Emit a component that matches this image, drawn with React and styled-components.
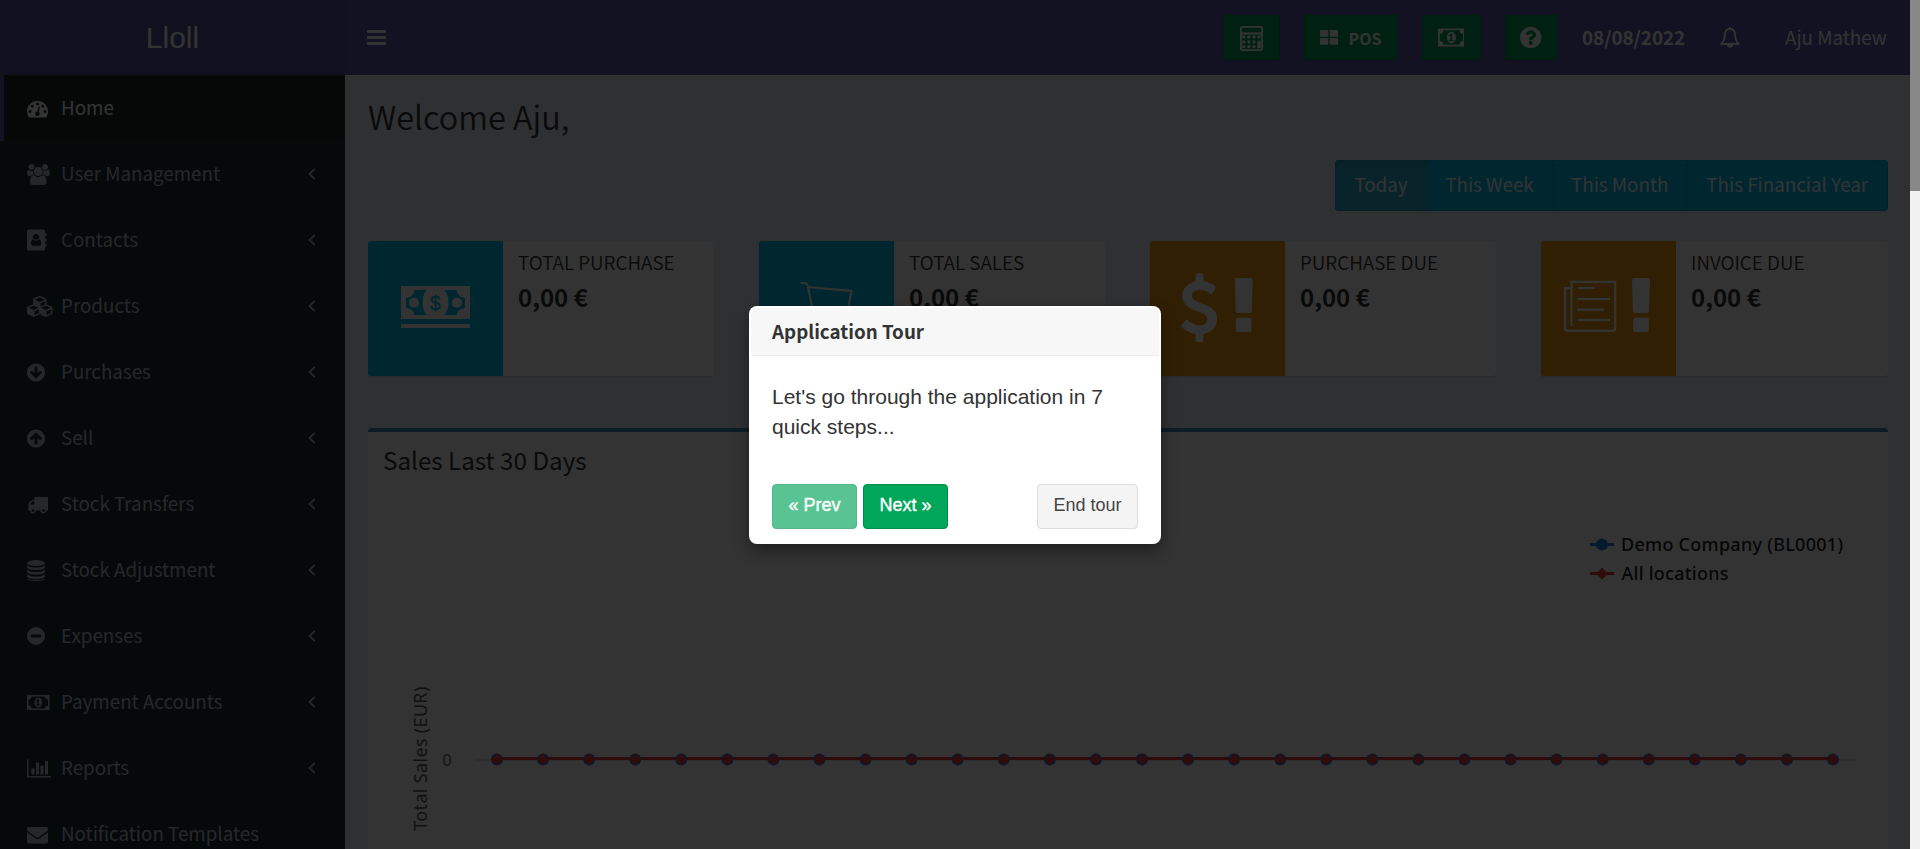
import React from "react";
import styled, { createGlobalStyle, css } from "styled-components";

const GlobalStyle = createGlobalStyle`
  * { box-sizing: border-box; }
  body { margin: 0; overflow: hidden; font-family: "Noto Sans CJK SC", "Noto Sans", sans-serif; font-size: 18.8px; color: #333; }
  button { font-family: inherit; margin: 0; cursor: pointer; }
  svg { display: block; flex: none; }
`;

const Window = styled.div`
  position: relative;
  display: flex;
  width: 1920px;
  height: 849px;
  overflow: hidden;
`;
const Page = styled.div`
  width: 1910px;
  display: flex;
  flex-direction: column;
  background: #ecf0f5;
`;
const ScrollTrack = styled.div`
  width: 10px;
  background: #f1f1f1;
`;
const ScrollThumb = styled.div`
  height: 191px;
  background: #888;
`;
const Header = styled.header`
  display: flex;
  flex: none;
  height: 75px;
  color: #fff;
`;
const Logo = styled.div`
  width: 345px;
  background: #555299;
  font: 30px/75px "Liberation Sans", Arial, sans-serif;
  text-align: center;
`;
const Navbar = styled.nav`
  flex: 1;
  display: flex;
  align-items: center;
  background: #605ca8;
  padding: 0 23px 0 22px;
`;
const NavTools = styled.div`
  margin-left: auto;
  display: flex;
  align-items: center;
`;
const NavButton = styled.button`
  width: ${(p) => p.$width}px;
  height: 45px;
  margin-right: 24px;
  padding: 0 1px 0 0;
  display: flex;
  align-items: center;
  justify-content: center;
  gap: 11px;
  border: 1px solid #008d4c;
  background: #00a65a;
  color: #fff;
  font-weight: 700;
  font-size: 16px;
`;
const NavDate = styled.strong`
  width: 105px;
  padding-bottom: 2px;
  font-size: 18.8px;
  line-height: 30px;
  white-space: nowrap;
`;
const NavBell = styled.span`
  margin: 0 45px 0 33px;
`;
const NavUser = styled.span`
  width: 102px;
  padding-bottom: 2px;
  line-height: 30px;
  white-space: nowrap;
`;
const Body = styled.div`
  display: flex;
  flex: 1;
  min-height: 0;
`;
const Sidebar = styled.aside`
  width: 345px;
  flex: none;
  background: #222d32;
  overflow: hidden;
`;
const MenuItem = styled.div`
  height: 66px;
  display: flex;
  align-items: center;
  padding: 0 29px 0 23px;
  border-left: 4px solid transparent;
  color: #b8c7ce;
  line-height: 30px;
  ${(p) =>
    p.$active &&
    css`
      border-left-color: #605ca8;
      background: #1e282c;
      color: #fff;
    `}
`;
const MenuIcon = styled.span`
  width: 34px;
  display: flex;
`;
const MenuLabel = styled.span`
  flex: 1;
  white-space: nowrap;
  margin-top: -3px;
`;
const Content = styled.main`
  flex: 1;
  padding: 0 22px 0 23px;
  display: flex;
  flex-direction: column;
`;
const Welcome = styled.h1`
  margin: 21px 0 1px;
  font-size: 32.4px;
  font-weight: 350;
  line-height: 40px;
`;
const RangeGroup = styled.div`
  margin-top: 23px;
  align-self: flex-end;
  display: flex;
  height: 51px;
  border-radius: 4px;
  overflow: hidden;
`;
const RangeButton = styled.div`
  width: ${(p) => p.$width}px;
  border: 1px solid ${(p) => (p.$active ? "#269abc" : "#00acd6")};
  border-left-width: ${(p) => (p.$active ? 1 : 0)}px;
  background: ${(p) => (p.$active ? "#31b0d5" : "#00c0ef")};
  box-shadow: ${(p) => (p.$active ? "inset 0 4px 7px rgba(0,0,0,.125)" : "none")};
  color: #fff;
  line-height: 46px;
  text-align: center;
  white-space: nowrap;
`;
const Cards = styled.div`
  margin-top: 30px;
  display: grid;
  grid-template-columns: repeat(3, 346px) 347px;
  column-gap: 45px;
`;
const Card = styled.section`
  height: 135px;
  display: flex;
  background: #fff;
  border-radius: 3px;
  overflow: hidden;
  box-shadow: 0 1.5px 1.5px rgba(0, 0, 0, 0.1);
`;
const CardIcon = styled.div`
  width: 135px;
  background: ${(p) => p.$color};
  color: #fff;
`;
const CardBody = styled.div`
  padding: 6px 15px;
`;
const CardLabel = styled.div`
  font-size: 18.9px;
  font-weight: 350;
  line-height: 30px;
  text-transform: uppercase;
`;
const CardValue = styled.div`
  margin-top: 6px;
  font-weight: 700;
  font-size: 24px;
  line-height: 28px;
`;
const ChartBox = styled.section`
  margin-top: 52px;
  flex: 1;
  background: #fff;
  border-top: 4px solid #3c8dbc;
  border-radius: 4px 4px 0 0;
`;
const ChartTitle = styled.h3`
  margin: 0;
  padding: 12px 15px 0;
  height: 58px;
  font-size: 24.2px;
  font-weight: 400;
  line-height: 32px;
`;
const Backdrop = styled.div`
  position: absolute;
  inset: 0 10px 0 0;
  background: rgba(0, 0, 0, 0.8);
`;
const Popover = styled.div`
  position: absolute;
  left: 749px;
  top: 306px;
  width: 412px;
  height: 238px;
  padding: 2px;
  display: flex;
  flex-direction: column;
  background: #fff;
  border-radius: 8px;
  box-shadow: 0 7px 15px rgba(0, 0, 0, 0.4);
`;
const PopoverTitle = styled.h3`
  margin: 0;
  height: 48px;
  padding: 0 21px;
  border-bottom: 1px solid #ebebeb;
  border-radius: 7px 7px 0 0;
  background: #f7f7f7;
  font-size: 18.8px;
  font-weight: 700;
  line-height: 45px;
`;
const PopoverText = styled.p`
  margin: 0;
  padding: 26px 21px 0;
  height: 128px;
  font: 21px/30px "Liberation Sans", Arial, sans-serif;
`;
const PopoverActions = styled.div`
  display: flex;
  gap: 6px;
  padding: 0 21px;
`;
const TourButton = styled.button`
  width: ${(p) => p.$width}px;
  height: 45px;
  padding: 0 0 2px;
  border: 1px solid ${(p) => (p.$plain ? "#ddd" : "#008d4c")};
  border-radius: 4px;
  background: ${(p) => (p.$plain ? "#f4f4f4" : "#00a65a")};
  color: ${(p) => (p.$plain ? "#444" : "#fff")};
  opacity: ${(p) => (p.$disabled ? 0.65 : 1)};
  margin-left: ${(p) => (p.$plain ? "auto" : 0)};
  font: 18px "Liberation Sans", Arial, sans-serif;
  -webkit-text-stroke: ${(p) => (p.$plain ? 0 : 0.4)}px currentColor;
`;

const PATHS = {
  gauge: "M384 1152q0-53-37.5-90.5t-90.5-37.5-90.5 37.5-37.5 90.5 37.5 90.5 90.5 37.5 90.5-37.5 37.5-90.5zm192-448q0-53-37.5-90.5t-90.5-37.5-90.5 37.5-37.5 90.5 37.5 90.5 90.5 37.5 90.5-37.5 37.5-90.5zm428 481l101-382q6-26-7.5-48.5t-38.5-29.5-48 6.5-30 39.5l-101 382q-60 5-107 43.5t-63 98.5q-20 77 20 146t117 89 146-20 89-117q16-60-6-117t-72-91zm660-33q0-53-37.5-90.5t-90.5-37.5-90.5 37.5-37.5 90.5 37.5 90.5 90.5 37.5 90.5-37.5 37.5-90.5zm-640-640q0-53-37.5-90.5t-90.5-37.5-90.5 37.5-37.5 90.5 37.5 90.5 90.5 37.5 90.5-37.5 37.5-90.5zm448 192q0-53-37.5-90.5t-90.5-37.5-90.5 37.5-37.5 90.5 37.5 90.5 90.5 37.5 90.5-37.5 37.5-90.5zm320 448q0 261-141 483-19 29-54 29h-1402q-35 0-54-29-141-221-141-483 0-182 71-348t191-286 286-191 348-71 348 71 286 191 191 286 71 348z",
  users: "M593 896q-162 5-265 128h-134q-82 0-138-40.5t-56-118.5q0-353 124-353 6 0 43.5 21t97.5 42.5 119 21.5q67 0 133-23-5 37-5 66 0 159 93 305zm1071 637q0 120-73 189.5t-194 69.5h-874q-121 0-194-69.5t-73-189.5q0-53 3.5-103.5t14-109 26.5-108.5 43-97.5 62-81 85.5-53.5 111.5-20q10 0 43 21.5t73 48 107 48 135 21.5 135-21.5 107-48 73-48 43-21.5q61 0 111.5 20t85.5 53.5 62 81 43 97.5 26.5 108.5 14 109 3.5 103.5zm-1024-1277q0 106-75 181t-181 75-181-75-75-181 75-181 181-75 181 75 75 181zm704 384q0 159-112.5 271.5t-271.5 112.5-271.5-112.5-112.5-271.5 112.5-271.5 271.5-112.5 271.5 112.5 112.5 271.5zm576 225q0 78-56 118.5t-138 40.5h-134q-103-123-265-128 93-146 93-305 0-29-5-66 66 23 133 23 59 0 119-21.5t97.5-42.5 43.5-21q124 0 124 353zm-128-609q0 106-75 181t-181 75-181-75-75-181 75-181 181-75 181 75 75 181z",
  cubes: "M640 1632l384-192v-314l-384 164v342zm-64-454l404-173-404-173-404 173zm1088 454l384-192v-314l-384 164v342zm-64-454l404-173-404-173-404 173zm-448-293l384-165v-266l-384 164v267zm-64-379l441-189-441-189-441 189zm1088 518v416q0 36-19 67t-52 47l-448 224q-25 14-57 14t-57-14l-448-224q-4-2-7-4-2 2-7 4l-448 224q-25 14-57 14t-57-14l-448-224q-33-16-52-47t-19-67v-416q0-38 21.5-70t56.5-48l434-186v-400q0-38 21.5-70t56.5-48l448-192q23-10 50-10t50 10l448 192q35 16 56.5 48t21.5 70v400l434 186q36 16 57 48t21 70z",
  down: "M1284 897q0-27-18-45l-91-91q-18-18-45-18t-45 18l-189 189v-502q0-26-19-45t-45-19h-128q-26 0-45 19t-19 45v502l-189-189q-19-19-45-19t-45 19l-91 91q-18 18-18 45t18 45l362 362 91 91q18 18 45 18t45-18l91-91 362-362q18-18 18-45zm252-1q0 209-103 385.5t-279.5 279.5-385.5 103-385.5-103-279.5-279.5-103-385.5 103-385.5 279.5-279.5 385.5-103 385.5 103 279.5 279.5 103 385.5z",
  truck: "M640 1408q0-52-38-90t-90-38-90 38-38 90 38 90 90 38 90-38 38-90zm-384-512h384v-256h-158q-13 0-22 9l-195 195q-9 9-9 22v30zm1280 512q0-52-38-90t-90-38-90 38-38 90 38 90 90 38 90-38 38-90zm256-1088v1024q0 15-4 26.5t-13.5 18.5-16.5 11.5-23.5 6-22.5 2-25.5 0-22.5-.5q0 106-75 181t-181 75-181-75-75-181h-384q0 106-75 181t-181 75-181-75-75-181h-64q-3 0-22.5.5t-25.5 0-22.5-2-23.5-6-16.5-11.5-13.5-18.5-4-26.5q0-26 19-45t45-19v-320q0-8-.5-35t0-38 2.5-34.5 6.5-37 14-30.5 22.5-30l198-198q19-19 50.5-32t58.5-13h160v-192q0-26 19-45t45-19h1024q26 0 45 19t19 45z",
  money: "M768 1152h384v-96h-128v-448h-114l-148 137 77 80q42-37 55-57h2v288h-128v96zm512-256q0 70-21 142t-59.5 134-101.5 101-138 39-138-39-101.5-101-59.5-134-21-142 21-142 59.5-134 101.5-101 138-39 138 39 101.5 101 59.5 134 21 142zm512 256v-512q-106 0-181-75t-75-181h-1152q0 106-75 181t-181 75v512q106 0 181 75t75 181h1152q0-106 75-181t181-75zm128-832v1152q0 26-19 45t-45 19h-1792q-26 0-45-19t-19-45v-1152q0-26 19-45t45-19h1792q26 0 45 19t19 45z",
  chart: "M640 896v512h-256v-512h256zm384-512v1024h-256v-1024h256zm1024 1152v128h-2048v-1536h128v1408h1920zm-640-896v768h-256v-768h256zm384-384v1152h-256v-1152h256z",
  envelope: "M1792 710v794q0 66-47 113t-113 47h-1472q-66 0-113-47t-47-113v-794q44 49 101 87 362 246 497 345 57 42 92.5 65.5t94.5 48 110 24.5h2q51 0 110-24.5t94.5-48 92.5-65.5q170-123 498-345 57-39 100-87zm0-294q0 79-49 151t-122 123q-376 261-468 325-10 7-42.5 31t-54 38.5-52 32.5-57.5 27-50 9h-2q-23 0-50-9t-57.5-27-52-32.5-54-38.5-42.5-31q-91-64-262-182.5t-205-142.5q-62-42-117-115.5t-55-136.5q0-78 41.5-130t118.5-52h1472q65 0 112.5 47t47.5 113z",
  question: "M896 1376v-192q0-14-9-23t-23-9h-192q-14 0-23 9t-9 23v192q0 14 9 23t23 9h192q14 0 23-9t9-23zm256-672q0-88-55.5-163t-138.5-116-170-41q-243 0-371 213-15 24 8 42l132 100q7 6 19 6 16 0 25-12 53-68 86-92 34-24 86-24 48 0 85.5 26t37.5 59q0 38-20 61t-68 45q-63 28-115.5 86.5t-52.5 125.5v36q0 14 9 23t23 9h192q14 0 23-9t9-23q0-19 21.5-49.5t54.5-49.5q32-18 49-28.5t46-35 44.5-48 28-60.5 12.5-81zm384 192q0 209-103 385.5t-279.5 279.5-385.5 103-385.5-103-279.5-279.5-103-385.5 103-385.5 279.5-279.5 385.5-103 385.5 103 279.5 279.5 103 385.5z",
  dollar: "M1362 1185q0 153-99.5 263.5t-258.5 136.5v175q0 14-9 23t-23 9h-135q-13 0-22.5-9.5t-9.5-22.5v-175q-66-9-127.5-31t-101.5-44.5-74-48-46.5-37.5-17.5-18q-17-21-2-41l103-135q7-10 23-12 15-2 24 9l2 2q113 99 243 125 37 8 74 8 81 0 142.5-43t61.5-122q0-28-15-53t-33.5-42-58.5-37.5-66-32-80-32.5q-39-16-61.5-25t-61.5-26.5-62.5-31-56.5-35.5-53.5-42.5-43.5-49-35.5-58-21-66.5-8.5-78q0-138 98-242t255-134v-180q0-13 9.5-22.5t22.5-9.5h135q14 0 23 9t9 23v176q57 6 110.5 23t87 33.5 63.5 37.5 39 29 15 14q17 18 5 38l-81 146q-8 15-23 16-14 3-27-7-3-3-14.5-12t-39-26.5-58.5-32-74.5-26-85.5-11.5q-95 0-155 43t-60 111q0 26 8.5 48t29.5 41.5 39.5 33 56 31 60.5 27 70 27.5q53 20 81 31.5t76 35 75.5 42.5 62 50 53 63.5 31.5 76.5 13 94z",
};

function Glyph({ name, units = 1792, size = 21, flip }) {
  return (
    <svg width={(units / 1792) * size} height={size} viewBox={`0 0 ${units} 1792`} fill="currentColor">
      <path d={PATHS[name]} transform={flip ? `rotate(180 ${units / 2} 896)` : undefined} />
    </svg>
  );
}

function AddressBook() {
  return (
    <svg width="21" height="22" viewBox="0 0 21 22">
      <path
        fill="currentColor"
        fillRule="evenodd"
        d="M1.5 0.5H16.5Q18 .5 18 2V4.3H19.6V7H18V9.6H19.6V12.3H18V14.9H19.6V17.6H18V20Q18 21.5 16.5 21.5H1.5Q0 21.5 0 20V2Q0 .5 1.5 .5ZM9 4.8A3.2 3.4 0 0 0 6.2 9.9Q4 10.6 4 14.6Q4 16.8 6 16.8H12.3Q14.2 16.8 14.2 14.6Q14.2 10.6 11.9 9.9A3.2 3.4 0 0 0 9 4.8Z"
      />
      <path d="M6.3 10.2Q9 12.6 11.8 10.2" fill="none" stroke="currentColor" strokeWidth="1" />
    </svg>
  );
}

function Database() {
  return (
    <svg width="18" height="21" viewBox="0 0 18 21" fill="currentColor">
      <ellipse cx="9" cy="3" rx="9" ry="3" />
      {[0, 4.5, 9].map((y) => (
        <path key={y} transform={`translate(0 ${y})`} d="M0 5.2Q3 7.5 9 7.5T18 5.2V7Q18 10 9 10T0 7Z" />
      ))}
      <path d="M0 18.7Q3 20 9 20T18 18.7V18.6Q18 21 9 21T0 18.6Z" />
    </svg>
  );
}

function MinusCircle() {
  return (
    <svg width="18" height="18" viewBox="0 0 18 18" fill="currentColor">
      <path fillRule="evenodd" d="M9 0A9 9 0 1 1 9 18A9 9 0 1 1 9 0ZM4.6 7.5Q3.9 7.5 3.9 8.2V9.8Q3.9 10.5 4.6 10.5H13.4Q14.1 10.5 14.1 9.8V8.2Q14.1 7.5 13.4 7.5Z" />
    </svg>
  );
}

function Angle() {
  return (
    <svg width="8" height="12" viewBox="0 0 8 12" fill="none" stroke="currentColor" strokeWidth="1.8">
      <path d="M6.8 .8L1.6 6L6.8 11.2" />
    </svg>
  );
}

function Bars() {
  return (
    <svg width="19" height="15" viewBox="0 0 19 15" fill="currentColor">
      {[0, 6, 12].map((y) => (
        <rect key={y} y={y} width="19" height="3" rx="0.8" />
      ))}
    </svg>
  );
}

function Calculator() {
  return (
    <svg width="23" height="26" viewBox="0 -1 23 26" fill="currentColor">
      <rect x="0.9" y="0.9" width="21.2" height="23.2" rx="1.5" fill="none" stroke="currentColor" strokeWidth="1.8" />
      <rect x="1" y="6.4" width="21" height="2.2" />
      {[3.8, 8.9, 14].map((x) =>
        [10.9, 15.9, 20.6].map((y) => <circle key={`${x}-${y}`} cx={x} cy={y} r="1.7" />)
      )}
      <circle cx="19" cy="10.9" r="1.7" />
      <rect x="17.4" y="14.4" width="3.3" height="8" rx="1.5" />
    </svg>
  );
}

function Tiles() {
  return (
    <svg width="18" height="15" viewBox="0 0 18 15" fill="currentColor">
      <rect width="8.3" height="6.8" rx="1" />
      <rect x="9.7" width="8.3" height="6.8" rx="1" />
      <rect y="8" width="8.3" height="6.8" rx="1" />
      <rect x="9.7" y="8" width="8.3" height="6.8" rx="1" />
    </svg>
  );
}

function Bell() {
  return (
    <svg width="20" height="21" viewBox="0 0 20 21">
      <path d="M10 2C6.2 2 4.8 5 4.8 8C4.8 12.5 3.4 15 1.2 17H18.8C16.6 15 15.2 12.5 15.2 8C15.2 5 13.8 2 10 2Z" fill="none" stroke="currentColor" strokeWidth="1.8" strokeLinejoin="round" />
      <path d="M9 0h2v2h-2zM7 17.5h6a3 3.2 0 0 1-6 0z" fill="currentColor" />
    </svg>
  );
}

function TileArt({ children }) {
  return (
    <svg width="135" height="135" viewBox="0 0 135 135" fill="currentColor">
      {children}
    </svg>
  );
}

function Exclamation({ x }) {
  return (
    <g transform={`translate(${x} 37)`}>
      <path d="M1.8 0H16.2Q18 0 18 2L17 33Q16.9 35 15 35H3Q1.1 35 1 33L0 2Q0 0 1.8 0Z" />
      <rect x="1.2" y="39.8" width="15.6" height="14.2" rx="2" />
    </g>
  );
}

function CashArt() {
  return (
    <TileArt>
      <path
        fillRule="evenodd"
        d="M33 45H102V78H33ZM46.5 49Q45.5 56 38 57V67Q45.5 67.5 46.5 74H58.5Q54.5 69 54.5 61.5T58.5 49ZM76.5 49H88.5Q89.5 56 97 57V67Q89.5 67.5 88.5 74H76.5Q80.5 69 80.5 61.5T76.5 49Z"
      />
      <circle cx="46" cy="61.7" r="5" />
      <circle cx="89" cy="61.7" r="5" />
      <rect x="33" y="83" width="69" height="4" />
      <text x="67.5" y="68.5" textAnchor="middle" fontFamily="Liberation Sans" fontSize="19.5" fill="#00c0ef" stroke="#00c0ef" strokeWidth=".3">
        $
      </text>
    </TileArt>
  );
}

function CartArt() {
  return (
    <TileArt>
      <g fill="none" stroke="currentColor" strokeWidth="2.2">
        <path d="M41.5 42H46Q48 42 49 46L56 80H90" />
        <path d="M49 46L92.5 50L88 73L54.5 75" />
        <circle cx="60" cy="88" r="3.5" />
        <circle cx="85" cy="88" r="3.5" />
      </g>
    </TileArt>
  );
}

function PurchaseDueArt() {
  return (
    <TileArt>
      <path d={PATHS.dollar} transform="translate(14.9 32.3) scale(.0383)" />
      <Exclamation x={84.7} />
    </TileArt>
  );
}

function InvoiceDueArt() {
  return (
    <TileArt>
      <g fill="none" stroke="currentColor" strokeWidth="2.2">
        <path d="M30.5 85V40.8H74.2V87Q74.2 89.9 71.5 89.9H27Q24.1 89.9 24.1 87V47.1H29" />
        <path d="M36 47H54M36 58H69M36 68.7H63M36 79H69" />
      </g>
      <Exclamation x={91} />
    </TileArt>
  );
}

const BLUE = "#1a85e0";
const RED = "#ee3b3b";
const POINTS = Array.from({ length: 30 }, (_, i) => 129 + i * 46.07);

function Diamond({ x, y, r = 6 }) {
  return <path d={`M${x} ${y - r}L${x + r} ${y}L${x} ${y + r}L${x - r} ${y}Z`} fill={RED} />;
}

function SalesChart() {
  return (
    <svg width="1520" height="359" viewBox="0 0 1520 359" fontFamily="'Noto Sans', sans-serif" fontSize="18">
      <path d="M107 270H1489" stroke="#e6e6e6" strokeWidth="2" />
      <path d="M129 268.5H1465" stroke={RED} strokeWidth="3" />
      {POINTS.map((x) => (
        <circle key={x} cx={x} cy="269.5" r="6" fill={BLUE} />
      ))}
      {POINTS.map((x) => (
        <Diamond key={x} x={x} y={269.5} />
      ))}
      <text x="79" y="275.5" textAnchor="middle" fontSize="16.5" fill="#666">0</text>
      <text transform="translate(59 340.7) rotate(-90)" fill="#555" textLength="144">Total Sales (EUR)</text>
      <path d="M1222 54.5H1246" stroke={BLUE} strokeWidth="3" />
      <circle cx="1234" cy="54.5" r="6" fill={BLUE} />
      <path d="M1222 83.5H1246" stroke={RED} strokeWidth="3" />
      <Diamond x={1234} y={83.5} />
      <g fontWeight="500" fill="#222">
        <text x="1253" y="60.5" textLength="222">Demo Company (BL0001)</text>
        <text x="1253.5" y="89.5" textLength="107">All locations</text>
      </g>
    </svg>
  );
}

const MENU = [
  { label: "Home", icon: <Glyph name="gauge" />, active: true },
  { label: "User Management", icon: <Glyph name="users" units={1920} /> },
  { label: "Contacts", icon: <AddressBook /> },
  { label: "Products", icon: <Glyph name="cubes" units={2240} /> },
  { label: "Purchases", icon: <Glyph name="down" units={1536} /> },
  { label: "Sell", icon: <Glyph name="down" units={1536} flip /> },
  { label: "Stock Transfers", icon: <Glyph name="truck" /> },
  { label: "Stock Adjustment", icon: <Database /> },
  { label: "Expenses", icon: <MinusCircle /> },
  { label: "Payment Accounts", icon: <Glyph name="money" units={1920} /> },
  { label: "Reports", icon: <Glyph name="chart" units={2048} /> },
  { label: "Notification Templates", icon: <Glyph name="envelope" />, leaf: true },
];

const CARDS = [
  { label: "Total Purchase", color: "#00c0ef", art: <CashArt /> },
  { label: "Total Sales", color: "#00c0ef", art: <CartArt /> },
  { label: "Purchase Due", color: "#f39c12", art: <PurchaseDueArt /> },
  { label: "Invoice Due", color: "#f39c12", art: <InvoiceDueArt /> },
];

export default function App() {
  return (
    <Window>
      <GlobalStyle />
      <Page>
        <Header>
          <Logo>Lloll</Logo>
          <Navbar>
            <Bars />
            <NavTools>
              <NavButton $width={57}><Calculator /></NavButton>
              <NavButton $width={94}><Tiles />POS</NavButton>
              <NavButton $width={59}><Glyph name="money" units={1920} size={25} /></NavButton>
              <NavButton $width={53}><Glyph name="question" units={1536} size={25} /></NavButton>
              <NavDate>08/08/2022</NavDate>
              <NavBell><Bell /></NavBell>
              <NavUser>Aju Mathew</NavUser>
            </NavTools>
          </Navbar>
        </Header>
        <Body>
          <Sidebar>
            {MENU.map((m) => (
              <MenuItem key={m.label} $active={m.active}>
                <MenuIcon>{m.icon}</MenuIcon>
                <MenuLabel>{m.label}</MenuLabel>
                {!m.active && !m.leaf && <Angle />}
              </MenuItem>
            ))}
          </Sidebar>
          <Content>
            <Welcome>Welcome Aju,</Welcome>
            <RangeGroup>
              <RangeButton $width={92} $active>Today</RangeButton>
              <RangeButton $width={126}>This Week</RangeButton>
              <RangeButton $width={134.5}>This Month</RangeButton>
              <RangeButton $width={200.5}>This Financial Year</RangeButton>
            </RangeGroup>
            <Cards>
              {CARDS.map((c) => (
                <Card key={c.label}>
                  <CardIcon $color={c.color}>{c.art}</CardIcon>
                  <CardBody>
                    <CardLabel>{c.label}</CardLabel>
                    <CardValue>0,00 €</CardValue>
                  </CardBody>
                </Card>
              ))}
            </Cards>
            <ChartBox>
              <ChartTitle>Sales Last 30 Days</ChartTitle>
              <SalesChart />
            </ChartBox>
          </Content>
        </Body>
      </Page>
      <ScrollTrack><ScrollThumb /></ScrollTrack>
      <Backdrop />
      <Popover>
        <PopoverTitle>Application Tour</PopoverTitle>
        <PopoverText>Let's go through the application in 7 quick steps...</PopoverText>
        <PopoverActions>
          <TourButton $width={85} $disabled>« Prev</TourButton>
          <TourButton $width={85}>Next »</TourButton>
          <TourButton $width={101} $plain>End tour</TourButton>
        </PopoverActions>
      </Popover>
    </Window>
  );
}
